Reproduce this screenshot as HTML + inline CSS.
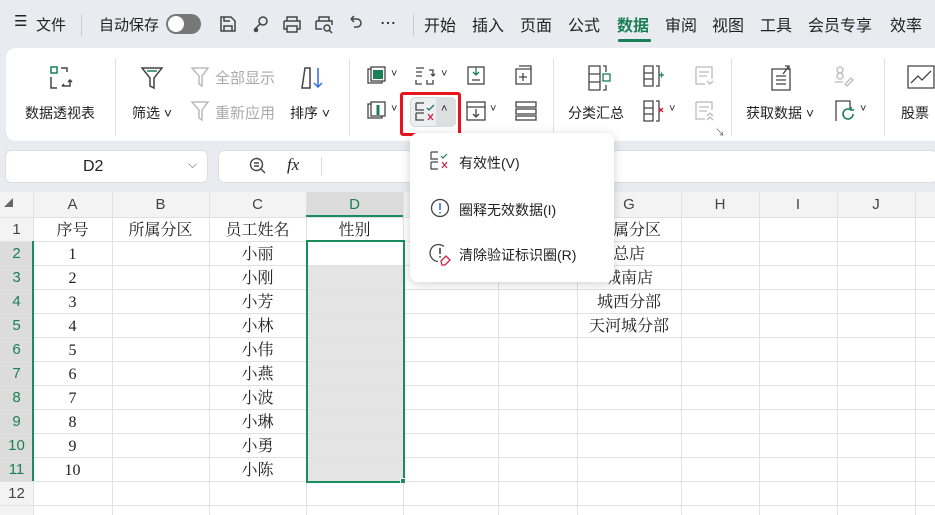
<!DOCTYPE html>
<html><head><meta charset="utf-8"><style>
*{margin:0;padding:0;box-sizing:border-box}
body{width:935px;height:515px;overflow:hidden;background:#e9ebf0;font-family:"Liberation Sans","Noto Sans CJK SC",sans-serif;color:#222;position:relative}
.a{position:absolute;white-space:nowrap}
.t{font-size:16px;top:12px}
.rb{position:absolute;left:6px;top:48px;width:940px;height:93px;background:#fff;border-radius:10px}
.sep{position:absolute;top:58px;width:1px;height:78px;background:#e0e2e6}
.lb{font-size:14px;color:#222}
.gr{color:#aaa}
svg{position:absolute;overflow:visible}
.grid{position:absolute;left:0;top:192px;width:935px;height:323px;background:#fff}
.hl{position:absolute;left:0;width:935px;height:1px;background:#e1e1e1}
.vl{position:absolute;top:192px;width:1px;height:323px;background:#e1e1e1}
.c{position:absolute;text-align:center;font-family:"Liberation Serif","Noto Serif CJK SC",serif;font-size:16px;height:24px;line-height:27px}
.rh{position:absolute;left:0;width:33px;text-align:center;font-size:15px;height:24px;line-height:25px;color:#444}
.ch{position:absolute;top:192px;height:25px;line-height:25px;text-align:center;font-size:15px;color:#444}
</style></head><body>
<!-- top bar -->
<div class="a t" style="left:14px;font-size:15px">☰</div>
<div class="a t" style="left:36px;font-size:15px;top:14px">文件</div>
<div class="a" style="left:81px;top:14px;width:1px;height:22px;background:#ccc"></div>
<div class="a t" style="left:99px;font-size:15px;top:14px">自动保存</div>
<div class="a" style="left:166px;top:14px;width:35px;height:20px;border-radius:10px;background:#777"><div style="position:absolute;left:2px;top:2px;width:16px;height:16px;border-radius:50%;background:#fff"></div></div>
<svg style="left:219px;top:15px" width="18" height="18" fill="none" stroke="#444" stroke-width="1.5"><path d="M2 2h10l4 4v10H2z M5 16v-5h8v5 M5 2v4h6"/></svg>
<svg style="left:253px;top:15px" width="18" height="18" fill="none" stroke="#444" stroke-width="1.5"><circle cx="10" cy="6" r="4"/><path d="M7 9l-4 4v3"/><circle cx="3" cy="15" r="1.5"/></svg>
<svg style="left:282px;top:15px" width="20" height="18" fill="none" stroke="#444" stroke-width="1.5"><path d="M5 6V2h10v4 M2 6h16v8h-3 M5 14H2V6 M5 11h10v6H5z"/></svg>
<svg style="left:314px;top:15px" width="20" height="18" fill="none" stroke="#444" stroke-width="1.5"><path d="M5 6V2h10v4 M2 6h16v4 M2 6v8h6"/><circle cx="13" cy="13" r="3"/><path d="M15 15l3 3"/></svg>
<svg style="left:348px;top:15px" width="16" height="18" fill="none" stroke="#444" stroke-width="1.5"><path d="M3 4h6a4 4 0 0 1 0 8H6 M3 4l3-3 M3 4l3 3"/></svg>
<div class="a t" style="left:380px;font-size:16px;top:10px">⋯</div>
<div class="a" style="left:413px;top:14px;width:1px;height:22px;background:#ccc"></div>
<div class="a t" style="left:424px">开始</div>
<div class="a t" style="left:472px">插入</div>
<div class="a t" style="left:520px">页面</div>
<div class="a t" style="left:568px">公式</div>
<div class="a t" style="left:617px;color:#1a7f55;font-weight:bold">数据</div>
<div class="a" style="left:618px;top:39px;width:33px;height:3px;background:#1a7f55;border-radius:1px"></div>
<div class="a t" style="left:665px">审阅</div>
<div class="a t" style="left:712px">视图</div>
<div class="a t" style="left:760px">工具</div>
<div class="a t" style="left:808px">会员专享</div>
<div class="a t" style="left:890px">效率</div>
<!-- ribbon -->
<div class="rb"></div>
<div class="sep" style="left:115px"></div><div class="sep" style="left:349px"></div><div class="sep" style="left:553px"></div><div class="sep" style="left:731px"></div><div class="sep" style="left:884px"></div>
<svg style="left:50px;top:66px" width="26" height="24" fill="none" stroke="#444" stroke-width="1.5"><rect x="1" y="1" width="6" height="6" stroke="#1a7f55"/><path d="M11 2h6v4 M1 11v11h6 M12 20h8v-6 M18 16l2-2 2 2 M12 20l2-2"/></svg>
<div class="a lb" style="left:25px;top:103px">数据透视表</div>
<svg style="left:140px;top:66px" width="24" height="24" fill="none" stroke="#444" stroke-width="1.5"><path d="M2 2h20l-8 10v10l-4-2V12z"/><path d="M7 5h10" stroke="#1a7f55"/></svg>
<div class="a lb" style="left:132px;top:103px">筛选 ˅</div>
<svg style="left:190px;top:66px" width="20" height="22" fill="none" stroke="#bbb" stroke-width="1.5"><path d="M2 2h16l-6 8v10l-3-2V10z"/></svg>
<div class="a lb gr" style="left:215px;top:67px;font-size:15px">全部显示</div>
<svg style="left:190px;top:100px" width="20" height="22" fill="none" stroke="#bbb" stroke-width="1.5"><path d="M2 2h16l-6 8v10l-3-2V10z"/></svg>
<div class="a lb gr" style="left:215px;top:102px;font-size:15px">重新应用</div>
<svg style="left:299px;top:66px" width="26" height="24" fill="none" stroke="#444" stroke-width="1.5"><path d="M3 22l3-20h5v20z"/><path d="M19 2v19 M15 17l4 4 4-4" stroke="#2f6fe0"/></svg>
<div class="a lb" style="left:290px;top:103px">排序 ˅</div>
<svg style="left:367px;top:66px" width="20" height="20" fill="none" stroke="#444" stroke-width="1.3"><rect x="1" y="3" width="14" height="14"/><rect x="4" y="1" width="14" height="14" fill="#fff"/><rect x="6" y="4" width="10" height="9" fill="#1a7f55" stroke="none"/></svg>
<div class="a" style="left:391px;top:68px;font-size:11px">˅</div>
<svg style="left:415px;top:66px" width="20" height="20" fill="none" stroke="#444" stroke-width="1.3"><path d="M1 2h8 M1 6h6 M1 10h6 M1 14v4h6 M12 14v4h6v-4 M14 4h4v6 M16 8l2 2 2-2"/></svg>
<div class="a" style="left:441px;top:68px;font-size:11px">˅</div>
<svg style="left:467px;top:65px" width="18" height="20" fill="none" stroke="#444" stroke-width="1.3"><rect x="1" y="2" width="16" height="17"/><path d="M9 2v8 M6 7l3 3 3-3" stroke="#1a7f55"/><path d="M5 15h8"/></svg>
<svg style="left:515px;top:65px" width="20" height="20" fill="none" stroke="#444" stroke-width="1.3"><path d="M4 1h12v3 M1 4h15v15H1z M8 8v8 M4 12h8"/></svg>
<svg style="left:367px;top:101px" width="20" height="20" fill="none" stroke="#444" stroke-width="1.3"><rect x="1" y="3" width="14" height="14"/><rect x="4" y="1" width="14" height="14" fill="#fff"/><path d="M11 4v10" stroke="#1a7f55" stroke-width="3"/></svg>
<div class="a" style="left:391px;top:103px;font-size:11px">˅</div>
<div class="a" style="left:410px;top:97px;width:46px;height:30px;background:#eceeef;border:1px solid #d6d6d6;border-radius:5px"></div>
<div class="a" style="left:436px;top:97px;width:20px;height:30px;background:#dcdee0;border-radius:0 5px 5px 0"></div>
<svg style="left:415px;top:102px" width="22" height="20" fill="none" stroke="#444" stroke-width="1.3"><path d="M1 1h8 M1 1v7h8 M1 11h8 M1 11v7h8"/><path d="M12 6l2 2 5-5" stroke="#1a7f55"/><path d="M13 12l5 6 M18 12l-5 6" stroke="#d02040"/></svg>
<div class="a" style="left:441px;top:103px;font-size:11px">˄</div>
<div class="a" style="left:400px;top:92px;width:61px;height:44px;border:3px solid #e8141a;border-radius:3px"></div>
<svg style="left:466px;top:101px" width="20" height="20" fill="none" stroke="#444" stroke-width="1.3"><rect x="1" y="1" width="18" height="18"/><path d="M1 6h18 M10 8v8 M7 13l3 3 3-3"/></svg>
<div class="a" style="left:490px;top:103px;font-size:11px">˅</div>
<svg style="left:515px;top:101px" width="22" height="20" fill="none" stroke="#444" stroke-width="1.3"><rect x="1" y="1" width="20" height="5"/><rect x="1" y="8" width="20" height="5"/><rect x="1" y="15" width="20" height="4"/></svg>
<svg style="left:588px;top:65px" width="24" height="26" fill="none" stroke="#444" stroke-width="1.3"><path d="M1 1h11v24H1z M1 9h11 M1 17h11 M15 1h3v6 M15 25h3v-5"/><rect x="15" y="9" width="7" height="7" stroke="#1a7f55"/></svg>
<div class="a lb" style="left:568px;top:103px">分类汇总</div>
<svg style="left:643px;top:65px" width="22" height="22" fill="none" stroke="#444" stroke-width="1.3"><path d="M1 1h9v20H1z M1 8h9 M1 14h9 M13 1h3v20h-3"/><path d="M16 10h5 M18.5 7.5v5" stroke="#1a7f55"/></svg>
<svg style="left:643px;top:100px" width="22" height="22" fill="none" stroke="#444" stroke-width="1.3"><path d="M1 1h9v20H1z M1 8h9 M1 14h9 M13 1h3v20h-3"/><path d="M16 8l4 4 M20 8l-4 4" stroke="#d02040"/></svg>
<div class="a" style="left:669px;top:103px;font-size:11px">˅</div>
<svg style="left:695px;top:66px" width="20" height="20" fill="none" stroke="#bbb" stroke-width="1.3"><path d="M1 1h16v12 M1 1v17h9 M4 6h10 M4 10h8 M12 15l3 3 3-3"/></svg>
<svg style="left:695px;top:101px" width="20" height="20" fill="none" stroke="#bbb" stroke-width="1.3"><path d="M1 1h16v8 M1 1v17h9 M4 6h10 M4 10h8 M12 15l3-3 3 3 M12 19l3-3 3 3"/></svg>
<div class="a" style="left:715px;top:124px;font-size:10px;color:#666">↘</div>
<svg style="left:771px;top:65px" width="24" height="26" fill="none" stroke="#444" stroke-width="1.3"><path d="M1 4h18v21H1z M5 11h10 M5 15h10 M5 19h10 M12 9l6-8 M14 1h4v4"/></svg>
<div class="a lb" style="left:746px;top:103px">获取数据 ˅</div>
<svg style="left:833px;top:66px" width="20" height="20" fill="none" stroke="#bbb" stroke-width="1.3"><circle cx="7" cy="4" r="3"/><circle cx="7" cy="10" r="3"/><path d="M2 16h8 M12 18l6-6 2 2-6 6z"/></svg>
<svg style="left:835px;top:100px" width="22" height="22" fill="none" stroke="#444" stroke-width="1.3"><path d="M1 21V1h14v7"/><path d="M18 14a5 5 0 1 1-2-4 M16 7v3h3" stroke="#1a7f55" stroke-width="1.6"/></svg>
<div class="a" style="left:860px;top:103px;font-size:11px">˅</div>
<svg style="left:907px;top:65px" width="28" height="24" fill="none" stroke="#444" stroke-width="1.3"><path d="M1 1h26v22H1z M4 18l7-7 4 4 9-9"/></svg>
<div class="a lb" style="left:901px;top:103px">股票</div>
<!-- formula bar -->
<div class="a" style="left:5px;top:150px;width:203px;height:33px;background:#fff;border:1px solid #ddd;border-radius:6px"></div>
<div class="a" style="left:83px;top:158px;font-size:16px">D2</div>
<div class="a" style="left:188px;top:157px;font-size:12px;color:#666">⌵</div>
<div class="a" style="left:218px;top:150px;width:720px;height:33px;background:#fff;border:1px solid #ddd;border-radius:6px"></div>
<svg style="left:249px;top:157px" width="18" height="18" fill="none" stroke="#444" stroke-width="1.4"><circle cx="7.5" cy="7.5" r="6"/><path d="M12 12l4 4 M5 6h5 M5 9h5"/></svg>
<div class="a" style="left:287px;top:155px;font-size:17px;font-style:italic;font-family:'Liberation Serif',serif">fx</div>
<div class="a" style="left:321px;top:157px;width:1px;height:19px;background:#ddd"></div>
<!-- grid -->
<div class="grid"></div>
<div class="a" style="left:0;top:192px;width:935px;height:25px;background:#f3f3f3"></div>
<div class="a" style="left:0;top:192px;width:33px;height:323px;background:#f3f3f3"></div>
<div class="a" style="left:0;top:241px;width:33px;height:240px;background:#dcdcdc"></div>
<div class="a" style="left:306px;top:192px;width:97px;height:25px;background:#dcdcdc"></div>
<div class="a" style="left:307px;top:265px;width:97px;height:216px;background:#e4e4e4"></div>
<div class="hl" style="top:217px"></div><div class="hl" style="top:241px"></div><div class="hl" style="top:265px"></div><div class="hl" style="top:289px"></div><div class="hl" style="top:313px"></div><div class="hl" style="top:337px"></div><div class="hl" style="top:361px"></div><div class="hl" style="top:385px"></div><div class="hl" style="top:409px"></div><div class="hl" style="top:433px"></div><div class="hl" style="top:457px"></div><div class="hl" style="top:481px"></div><div class="hl" style="top:505px"></div>
<div class="vl" style="left:33px"></div><div class="vl" style="left:112px"></div><div class="vl" style="left:209px"></div><div class="vl" style="left:306px"></div><div class="vl" style="left:403px"></div><div class="vl" style="left:498px"></div><div class="vl" style="left:577px"></div><div class="vl" style="left:681px"></div><div class="vl" style="left:759px"></div><div class="vl" style="left:837px"></div><div class="vl" style="left:915px"></div>
<div class="a" style="left:4px;top:196px;font-size:9px;color:#666">◢</div>
<div class="ch" style="left:33px;width:79px">A</div><div class="ch" style="left:112px;width:97px">B</div><div class="ch" style="left:209px;width:97px">C</div><div class="ch" style="left:306px;width:97px;color:#1a7f55">D</div><div class="ch" style="left:577px;width:104px">G</div><div class="ch" style="left:681px;width:78px">H</div><div class="ch" style="left:759px;width:78px">I</div><div class="ch" style="left:837px;width:78px">J</div>
<div class="a" style="left:306px;top:215px;width:97px;height:2px;background:#1a8c5e"></div>
<div class="a" style="left:32px;top:241px;width:2px;height:240px;background:#1a8c5e"></div>
<div class="rh" style="top:217px">1</div>
<div class="rh" style="top:241px;color:#1a7f55">2</div><div class="rh" style="top:265px;color:#1a7f55">3</div><div class="rh" style="top:289px;color:#1a7f55">4</div><div class="rh" style="top:313px;color:#1a7f55">5</div><div class="rh" style="top:337px;color:#1a7f55">6</div><div class="rh" style="top:361px;color:#1a7f55">7</div><div class="rh" style="top:385px;color:#1a7f55">8</div><div class="rh" style="top:409px;color:#1a7f55">9</div><div class="rh" style="top:433px;color:#1a7f55">10</div><div class="rh" style="top:457px;color:#1a7f55">11</div><div class="rh" style="top:481px">12</div>
<div class="c" style="left:33px;width:79px;top:217px">序号</div><div class="c" style="left:112px;width:97px;top:217px">所属分区</div><div class="c" style="left:209px;width:97px;top:217px">员工姓名</div><div class="c" style="left:306px;width:97px;top:217px">性别</div>
<div class="c" style="left:33px;width:79px;top:241px">1</div><div class="c" style="left:209px;width:97px;top:241px">小丽</div>
<div class="c" style="left:33px;width:79px;top:265px">2</div><div class="c" style="left:209px;width:97px;top:265px">小刚</div>
<div class="c" style="left:33px;width:79px;top:289px">3</div><div class="c" style="left:209px;width:97px;top:289px">小芳</div>
<div class="c" style="left:33px;width:79px;top:313px">4</div><div class="c" style="left:209px;width:97px;top:313px">小林</div>
<div class="c" style="left:33px;width:79px;top:337px">5</div><div class="c" style="left:209px;width:97px;top:337px">小伟</div>
<div class="c" style="left:33px;width:79px;top:361px">6</div><div class="c" style="left:209px;width:97px;top:361px">小燕</div>
<div class="c" style="left:33px;width:79px;top:385px">7</div><div class="c" style="left:209px;width:97px;top:385px">小波</div>
<div class="c" style="left:33px;width:79px;top:409px">8</div><div class="c" style="left:209px;width:97px;top:409px">小琳</div>
<div class="c" style="left:33px;width:79px;top:433px">9</div><div class="c" style="left:209px;width:97px;top:433px">小勇</div>
<div class="c" style="left:33px;width:79px;top:457px">10</div><div class="c" style="left:209px;width:97px;top:457px">小陈</div>
<div class="c" style="left:577px;width:104px;top:217px">所属分区</div><div class="c" style="left:577px;width:104px;top:241px">总店</div><div class="c" style="left:577px;width:104px;top:265px">城南店</div><div class="c" style="left:577px;width:104px;top:289px">城西分部</div><div class="c" style="left:577px;width:104px;top:313px">天河城分部</div>
<div class="a" style="left:306px;top:240px;width:99px;height:243px;border:2px solid #1a8c5e"></div>
<div class="a" style="left:400px;top:478px;width:6px;height:6px;background:#1a8c5e;border:1px solid #fff"></div>
<!-- dropdown -->
<div class="a" style="left:410px;top:133px;width:204px;height:149px;background:#fff;border-radius:8px;box-shadow:0 2px 10px rgba(0,0,0,.18)"></div>
<svg style="left:430px;top:151px" width="20" height="20" fill="none" stroke="#444" stroke-width="1.2"><path d="M1 1h7 M1 1v7h7 M1 11h7 M1 11v7h7"/><path d="M11 5l2 2 4-4" stroke="#1a7f55"/><path d="M12 11l5 6 M17 11l-5 6" stroke="#d02040"/></svg>
<div class="a" style="left:459px;top:153px;font-size:14px">有效性(V)</div>
<svg style="left:430px;top:198px" width="20" height="20" fill="none" stroke="#444" stroke-width="1.3"><circle cx="10" cy="10" r="8.5"/><path d="M10 5v7 M10 14v1.5" stroke="#2f6fe0" stroke-width="1.6"/></svg>
<div class="a" style="left:459px;top:200px;font-size:14px">圈释无效数据(I)</div>
<svg style="left:430px;top:243px" width="22" height="22" fill="none" stroke="#444" stroke-width="1.3"><path d="M14 3.5A8.5 8.5 0 1 0 8 18.5"/><path d="M10 5v6 M10 13v1.5" stroke-width="1.6"/><path d="M11 18l5-5 4 4-5 5h-3z" stroke="#d02040"/></svg>
<div class="a" style="left:459px;top:245px;font-size:14px">清除验证标识圈(R)</div>
</body></html>
